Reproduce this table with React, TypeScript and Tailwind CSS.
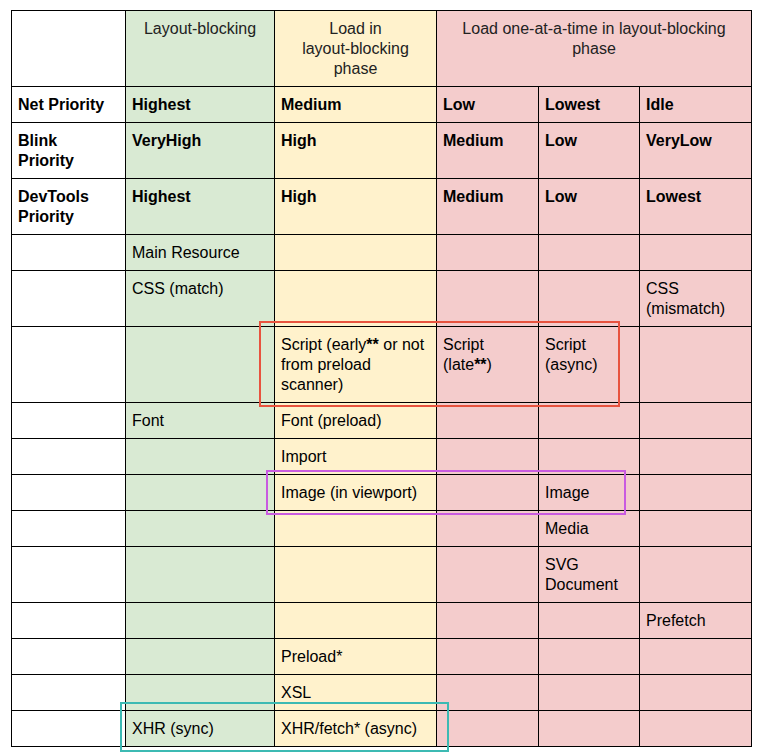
import type { ReactNode } from "react";

const colBg = [
  "bg-white",
  "bg-[#d9ead3]",
  "bg-[#fff2cc]",
  "bg-[#f4cccc]",
  "bg-[#f4cccc]",
  "bg-[#f4cccc]",
];

const B = ({ children }: { children: ReactNode }) => <span className="font-bold">{children}</span>;

const lines = (text: string) =>
  text.split("\n").map((line, i) => (
    <span key={i}>
      {i > 0 && <br />}
      {line}
    </span>
  ));

type Row = { bold?: boolean; cells: (string | ReactNode)[] };

const rows: Row[] = [
  { bold: true, cells: ["Net Priority", "Highest", "Medium", "Low", "Lowest", "Idle"] },
  { bold: true, cells: ["Blink\nPriority", "VeryHigh", "High", "Medium", "Low", "VeryLow"] },
  { bold: true, cells: ["DevTools\nPriority", "Highest", "High", "Medium", "Low", "Lowest"] },
  { cells: ["", "Main Resource", "", "", "", ""] },
  { cells: ["", "CSS (match)", "", "", "", "CSS\n(mismatch)"] },
  {
    cells: [
      "",
      "",
      <>
        Script (early<B>**</B> or not
        <br />
        from preload
        <br />
        scanner)
      </>,
      <>
        Script
        <br />
        (late<B>**</B>)
      </>,
      "Script\n(async)",
      "",
    ],
  },
  { cells: ["", "Font", "Font (preload)", "", "", ""] },
  { cells: ["", "", "Import", "", "", ""] },
  { cells: ["", "", "Image (in viewport)", "", "Image", ""] },
  { cells: ["", "", "", "", "Media", ""] },
  { cells: ["", "", "", "", "SVG\nDocument", ""] },
  { cells: ["", "", "", "", "", "Prefetch"] },
  { cells: ["", "", "Preload*", "", "", ""] },
  { cells: ["", "", "XSL", "", "", ""] },
  { cells: ["", "XHR (sync)", "XHR/fetch* (async)", "", "", ""] },
];

export default function App() {
  return (
    <div className="relative w-[762px] h-[756px] bg-white pt-[10px] pl-[11px] font-['Liberation_Sans',Arial,sans-serif] text-[16px] leading-[20px] text-black">
      <div className="grid w-fit grid-cols-[113px_148px_161px_101px_100px_111px] gap-px bg-black p-px">
        {/* header */}
        <div className="bg-white pt-2 pb-[7px]" />
        <div className={`${colBg[1]} pt-2 pb-[7px] px-[6px] text-center text-[#222]`}>Layout-blocking</div>
        <div className={`${colBg[2]} pt-2 pb-[7px] px-[6px] text-center text-[#222]`}>
          Load in
          <br />
          layout-blocking
          <br />
          phase
        </div>
        <div className={`${colBg[3]} col-span-3 pt-2 pb-[7px] px-[6px] text-center text-[#222]`}>
          Load one-at-a-time in layout-blocking
          <br />
          phase
        </div>

        {rows.map((row, r) =>
          row.cells.map((cell, c) => (
            <div
              key={`${r}-${c}`}
              className={`${colBg[c]} pt-2 pb-[7px] pl-[6px] pr-1 ${row.bold ? "font-bold" : ""}`}
            >
              {typeof cell === "string" ? lines(cell) : cell}
            </div>
          ))
        )}
      </div>

      {/* highlight boxes */}
      <div className="absolute left-[259px] top-[321px] w-[361px] h-[86px] border-2 border-[#e8533f]" />
      <div className="absolute left-[266px] top-[470px] w-[360px] h-[45px] border-2 border-[#c95be0]" />
      <div className="absolute left-[120px] top-[702px] w-[329px] h-[50px] border-2 border-[#3cbab3]" />
    </div>
  );
}
